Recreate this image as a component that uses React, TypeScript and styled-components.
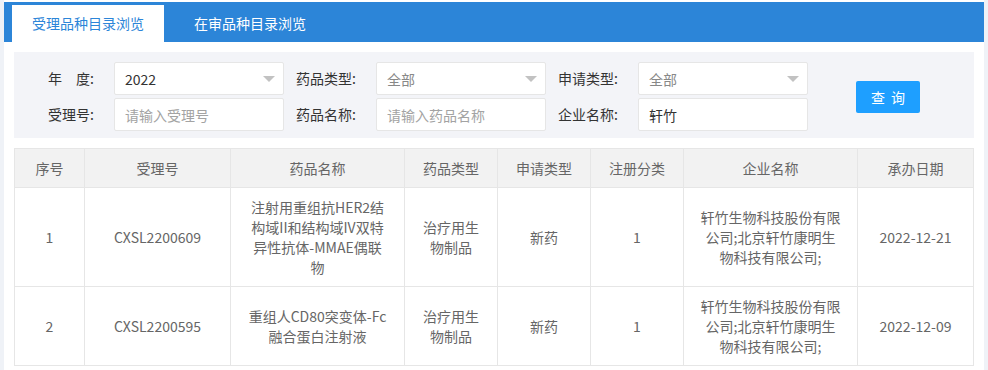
import React from 'react';
import styled, { createGlobalStyle } from "styled-components";

const GlobalStyle = createGlobalStyle`
  body {
    margin: 0;
    background: #eff2f7;
    font-family: "Noto Sans CJK SC", "Liberation Sans", sans-serif;
    font-size: 14px;
  }
`

type RowType = {
    no: number;
    code: string;
    //name and company are kept as the lines they wrap to
    name: string[];
    drugType: string;
    applyType: string;
    regClass: string;
    company: string[];
    date: string;
}

const rows: RowType[] = [
    {
        no: 1,
        code: "CXSL2200609",
        name: ["注射用重组抗HER2结", "构域II和结构域IV双特", "异性抗体-MMAE偶联", "物"],
        drugType: "治疗用生物制品",
        applyType: "新药",
        regClass: "1",
        company: ["轩竹生物科技股份有限", "公司;北京轩竹康明生", "物科技有限公司;"],
        date: "2022-12-21",
    },
    {
        no: 2,
        code: "CXSL2200595",
        name: ["重组人CD80突变体-Fc", "融合蛋白注射液"],
        drugType: "治疗用生物制品",
        applyType: "新药",
        regClass: "1",
        company: ["轩竹生物科技股份有限", "公司;北京轩竹康明生", "物科技有限公司;"],
        date: "2022-12-09",
    },
]

const columns = [
    {title: "序号", width: 70},
    {title: "受理号", width: 146},
    {title: "药品名称", width: 174},
    {title: "药品类型", width: 93},
    {title: "申请类型", width: 93},
    {title: "注册分类", width: 93},
    {title: "企业名称", width: 174},
    {title: "承办日期", width: 116},
]

const Lines = (props: { lines: string[] }) => (
    <>
        {props.lines.map((l, i) => <Line key={i}>{l}</Line>)}
    </>
)

const SelectField = (props: { value: string; muted?: boolean }) => (
    <SelectBox>
        <Input readOnly value={props.value} $muted={props.muted}/>
        <Caret/>
    </SelectBox>
)

export default function App() {
    return (
        <Page>
            <GlobalStyle/>
            <TabBar>
                <Tab $active>受理品种目录浏览</Tab>
                <Tab>在审品种目录浏览</Tab>
            </TabBar>
            <Content>
                <SearchPanel>
                    <Fields>
                        <Label>年　度:</Label>
                        <SelectField value="2022"/>
                        <Label>药品类型:</Label>
                        <SelectField value="全部" muted/>
                        <Label>申请类型:</Label>
                        <SelectField value="全部" muted/>
                        <Label>受理号:</Label>
                        <Input placeholder="请输入受理号"/>
                        <Label>药品名称:</Label>
                        <Input placeholder="请输入药品名称"/>
                        <Label>企业名称:</Label>
                        <Input defaultValue="轩竹"/>
                    </Fields>
                    <SearchButton>查询</SearchButton>
                </SearchPanel>
                <Table>
                    <colgroup>
                        {columns.map(c => <col key={c.title} style={{width: c.width}}/>)}
                    </colgroup>
                    <thead>
                    <tr>
                        {columns.map(c => <Th key={c.title}>{c.title}</Th>)}
                    </tr>
                    </thead>
                    <tbody>
                    {rows.map(r => (
                        <tr key={r.no}>
                            <Td>{r.no}</Td>
                            <Td>{r.code}</Td>
                            <Td><Lines lines={r.name}/></Td>
                            <Td>{r.drugType}</Td>
                            <Td>{r.applyType}</Td>
                            <Td>{r.regClass}</Td>
                            <Td><Lines lines={r.company}/></Td>
                            <Td>{r.date}</Td>
                        </tr>
                    ))}
                    </tbody>
                </Table>
            </Content>
        </Page>
    );
}

const Page = styled.div`
  margin-left: 4px;
  width: 980px;
  min-height: 370px;
  background: #fff;
  padding-top: 2px;
`
const TabBar = styled.div`
  display: flex;
  align-items: flex-end;
  gap: 10px;
  height: 40px;
  padding-left: 8px;
  background: #2c85d8;
`
const Tab = styled.div<{ $active?: boolean }>`
  height: 37px;
  line-height: 37px;
  padding: 0 20px;
  font-size: 14px;
  color: ${p => p.$active ? "#2c85d8" : "#fff"};
  background: ${p => p.$active ? "#fff" : "transparent"};
`
const Content = styled.div`
  padding: 10px 10px 0 10px;
`
const SearchPanel = styled.div`
  display: flex;
  align-items: center;
  background: #f3f4f8;
  padding: 10px 0 7px 8px;
`
const Fields = styled.div`
  display: grid;
  grid-template-columns: repeat(3, 92px 170px);
  row-gap: 3px;
`
const Label = styled.label`
  box-sizing: border-box;
  padding-right: 20px;
  text-align: right;
  line-height: 33px;
  color: #333;
  white-space: pre;
`
const Input = styled.input<{ $muted?: boolean }>`
  box-sizing: border-box;
  width: 170px;
  height: 33px;
  padding: 0 10px;
  border: 1px solid #e6e6e6;
  border-radius: 2px;
  background: #fff;
  font-family: inherit;
  font-size: 14px;
  color: ${p => p.$muted ? "#888" : "#333"};
  outline: none;

  &::placeholder {
    color: #a3a3a3;
  }
`
const SelectBox = styled.div`
  position: relative;
  width: 170px;
`
const Caret = styled.span`
  position: absolute;
  right: 9px;
  top: 14px;
  width: 0;
  height: 0;
  border-left: 6px solid transparent;
  border-right: 6px solid transparent;
  border-top: 6px solid #c2c2c2;
`
const SearchButton = styled.button`
  margin-left: 48px;
  width: 64px;
  height: 32px;
  padding: 0 0 0 6px;
  border: none;
  border-radius: 2px;
  background: #1e9fff;
  color: #fff;
  font-family: inherit;
  font-size: 14px;
  letter-spacing: 6px;
`
const Table = styled.table`
  margin-top: 10px;
  width: 959px;
  table-layout: fixed;
  border-collapse: collapse;
  color: #666;
`
const Th = styled.th`
  padding: 9px 15px;
  line-height: 20px;
  font-weight: normal;
  background: #f2f2f2;
  border: 1px solid #e6e6e6;
`
const Td = styled.td`
  padding: 9px 15px;
  line-height: 20px;
  text-align: center;
  border: 1px solid #e6e6e6;
  word-break: break-all;
`
const Line = styled.div`
  white-space: nowrap;
`
